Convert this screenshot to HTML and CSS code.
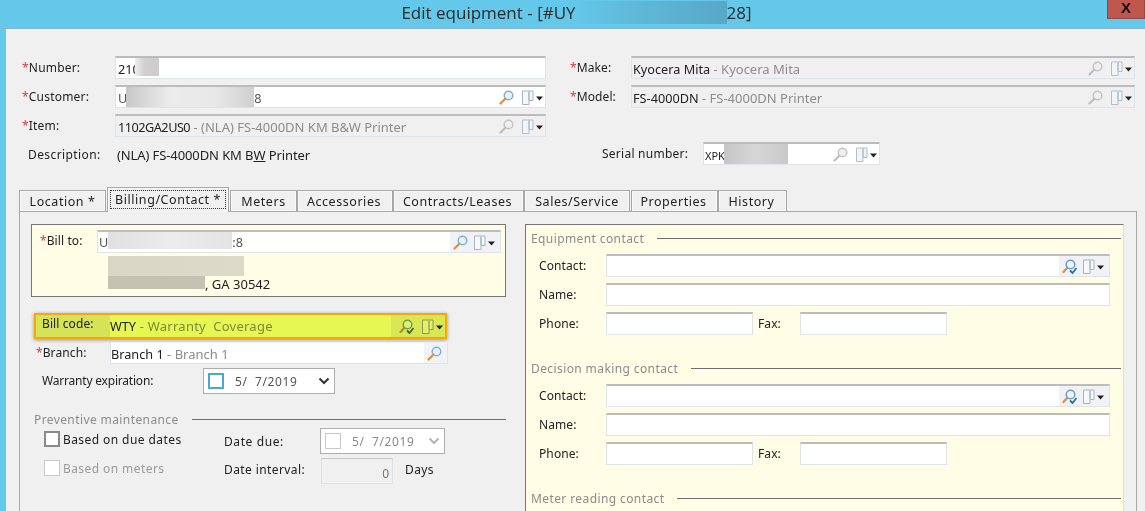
FILE: index.html
```html
<!DOCTYPE html>
<html lang="en">
<head>
<meta charset="utf-8">
<title>Edit equipment</title>
<link rel="stylesheet" href="styles.css">
</head>
<body>
<svg class="defs" width="0" height="0" aria-hidden="true">
  <defs>
    <g id="mag">
      <circle cx="9.500" cy="5.500" r="4.300" fill="#e6f2fb" stroke="#7fb2d8" stroke-width="1.500"/>
      <path d="M6.300 8.700 1.500 13.500" stroke="#d9913a" stroke-width="2.200" stroke-linecap="round"/>
    </g>
    <g id="magoff">
      <circle cx="9.500" cy="5.500" r="4.300" fill="#efefef" stroke="#c4c4c4" stroke-width="1.500"/>
      <path d="M6.300 8.700 1.500 13.500" stroke="#bdbdbd" stroke-width="2.200" stroke-linecap="round"/>
    </g>
    <g id="magchk">
      <circle cx="8.500" cy="5.500" r="4.300" fill="#eef6fc" stroke="#6a9fcb" stroke-width="1.500"/>
      <path d="M5.300 8.700 1.500 13" stroke="#d9913a" stroke-width="2.200" stroke-linecap="round"/>
      <path d="M8 11.500l2.500 2.500 4-5" fill="none" stroke="#2a6fa8" stroke-width="1.800"/>
    </g>
    <g id="maggrn">
      <circle cx="8.500" cy="5.500" r="4.300" fill="#dff07a" stroke="#6fa04a" stroke-width="1.500"/>
      <path d="M5.300 8.700 1.500 13" stroke="#a9902a" stroke-width="2.200" stroke-linecap="round"/>
      <path d="M8 11.500l2.500 2.500 4-5" fill="none" stroke="#2f6b3a" stroke-width="1.800"/>
    </g>
    <g id="doc">
      <path d="M.5 1h10.500v9.500h-4v4h-6.500z" fill="#f6f8fa" stroke="#aab4be"/>
      <path d="M7 1.500v9" stroke="#9fb4c8" stroke-width="1.500"/>
      <path d="M14 6.500h7l-3.500 4z" fill="#222"/>
    </g>
    <g id="docoff">
      <path d="M.5 1h10.500v9.500h-4v4h-6.500z" fill="#f2f4f6" stroke="#b4bec8"/>
      <path d="M7 1.500v9" stroke="#a8bccf" stroke-width="1.500"/>
      <path d="M14 6.500h7l-3.500 4z" fill="#222"/>
    </g>
    <g id="docyel">
      <path d="M.5 1h10.500v9.500h-4v4h-6.500z" fill="#e4ee66" stroke="#8f9a50"/>
      <path d="M7 1.500v9" stroke="#9da85a" stroke-width="1.500"/>
      <path d="M14 6.500h7l-3.500 4z" fill="#222"/>
    </g>
  </defs>
</svg>
<div class="app">
  <header class="titlebar">
    <h1 class="title">Edit equipment - [#UY<span class="redact-title"></span>28]</h1>
    <div class="close">X</div>
  </header>
  <main class="window">
    <section class="head">
      <div class="head-col">
        <div class="row"><label class="lbl lbl-head"><i>*</i>Number:</label>
          <div class="field grow"><span class="val">210<span class="redact r-number"></span></span></div></div>
        <div class="row"><label class="lbl lbl-head"><i>*</i>Customer:</label>
          <div class="field grow"><span class="val muted">U<span class="redact r-cust"></span>8</span>
            <span class="tools"><svg class="ic-mag"><use href="#mag"/></svg><svg class="ic-doc"><use href="#doc"/></svg></span></div></div>
        <div class="row"><label class="lbl lbl-head"><i>*</i>Item:</label>
          <div class="field off grow"><span class="val"><span class="tight">1102GA2US0</span><em>&nbsp;- (NLA) FS-4000DN KM B&amp;W Printer</em></span>
            <span class="tools"><svg class="ic-mag"><use href="#magoff"/></svg><svg class="ic-doc"><use href="#docoff"/></svg></span></div></div>
        <div class="row desc-row"><label class="lbl lbl-head lbl-plain">Description:</label>
          <span class="plain">(NLA) FS-4000DN KM B<u>W</u> Printer</span></div>
      </div>
      <div class="head-col right">
        <div class="row"><label class="lbl lbl-make"><i>*</i>Make:</label>
          <div class="field off grow"><span class="val">Kyocera Mita<em>&nbsp;- Kyocera Mita</em></span>
            <span class="tools"><svg class="ic-mag"><use href="#magoff"/></svg><svg class="ic-doc"><use href="#docoff"/></svg></span></div></div>
        <div class="row"><label class="lbl lbl-make"><i>*</i>Model:</label>
          <div class="field off grow"><span class="val">FS-4000DN<em>&nbsp;- FS-4000DN Printer</em></span>
            <span class="tools"><svg class="ic-mag"><use href="#magoff"/></svg><svg class="ic-doc"><use href="#docoff"/></svg></span></div></div>
        <div class="row spacer-row"></div>
        <div class="row serial-row"><label class="lbl lbl-serial">Serial number:</label>
          <div class="field serial"><span class="val val-small">XPK<span class="redact r-serial"></span></span>
            <span class="tools"><svg class="ic-mag"><use href="#magoff"/></svg><svg class="ic-doc"><use href="#docoff"/></svg></span></div></div>
      </div>
    </section>

    <nav class="tabs">
      <div class="tab t1">Location *</div>
      <div class="tab t2 active"><span class="focus">Billing/Contact *</span></div>
      <div class="tab t3">Meters</div>
      <div class="tab t4">Accessories</div>
      <div class="tab t5">Contracts/Leases</div>
      <div class="tab t6">Sales/Service</div>
      <div class="tab t7">Properties</div>
      <div class="tab t8">History</div>
    </nav>

    <section class="panel">
      <div class="left">
        <div class="billbox">
          <div class="billto-row"><label class="lbl lbl-bill"><i>*</i>Bill to:</label>
            <div class="field grow"><span class="val muted val-bill">U<span class="redact r-bill"></span>:8</span>
              <span class="tools shaded"><svg class="ic-mag"><use href="#mag"/></svg><svg class="ic-doc"><use href="#doc"/></svg></span></div></div>
          <div class="addr1"></div>
          <div class="addr2"><span class="addr2-redact"></span><span class="addr-text">, GA 30542</span></div>
        </div>

        <div class="highlight">
          <label class="lbl lbl-code">Bill code:</label>
          <div class="code-field"><span class="val">WTY<em class="olive">&nbsp;- Warranty&nbsp; Coverage</em></span>
            <span class="tools"><svg class="ic-mag"><use href="#maggrn"/></svg><svg class="ic-doc"><use href="#docyel"/></svg></span></div>
        </div>

        <div class="branch-row"><label class="lbl lbl-branch"><i>*</i>Branch:</label>
          <div class="field grow noborder"><span class="val">Branch 1<em>&nbsp;- Branch 1</em></span>
            <span class="tools shaded tool-single"><svg class="ic-mag"><use href="#mag"/></svg></span></div></div>

        <div class="warranty-row"><label class="lbl lbl-warranty">Warranty expiration:</label>
          <div class="date"><span class="check blue"></span><span class="date-text">5/&nbsp; 7/2019</span>
            <svg class="chev" viewBox="0 0 12 8"><path d="M1.500 1.500 6 6l4.500-4.500" fill="none" stroke="#333" stroke-width="2"/></svg></div></div>

        <div class="legend legend-pm"><span>Preventive maintenance</span><b></b></div>

        <div class="pm-grid">
          <div class="cb-row"><span class="check dark"></span><span class="cb-label">Based on due dates</span></div>
          <label class="lbl lbl-due">Date due:</label>
          <div class="date small"><span class="check light"></span><span class="date-text grey">5/&nbsp; 7/2019</span>
            <svg class="chev" viewBox="0 0 12 8"><path d="M1.500 1.500 6 6l4.500-4.500" fill="none" stroke="#b5b5b5" stroke-width="2"/></svg></div>
          <div class="cb-row cb-second"><span class="check light"></span><span class="cb-label grey">Based on meters</span></div>
          <label class="lbl lbl-interval">Date interval:</label>
          <div class="interval"><div class="num">0</div><span class="lbl days">Days</span></div>
        </div>
      </div>

      <div class="right-box">
        <div class="group">
          <div class="legend"><span>Equipment contact</span><b></b></div>
          <div class="c-row"><label class="lbl">Contact:</label><div class="field"><span class="tools shaded"><svg class="ic-mag"><use href="#magchk"/></svg><svg class="ic-doc"><use href="#doc"/></svg></span></div></div>
          <div class="c-row"><label class="lbl">Name:</label><div class="field"></div></div>
          <div class="c-row"><label class="lbl">Phone:</label><div class="phone-fax"><div class="field"></div><label class="lbl">Fax:</label><div class="field"></div></div></div>
        </div>
        <div class="group">
          <div class="legend"><span>Decision making contact</span><b></b></div>
          <div class="c-row"><label class="lbl">Contact:</label><div class="field"><span class="tools shaded"><svg class="ic-mag"><use href="#magchk"/></svg><svg class="ic-doc"><use href="#doc"/></svg></span></div></div>
          <div class="c-row"><label class="lbl">Name:</label><div class="field"></div></div>
          <div class="c-row"><label class="lbl">Phone:</label><div class="phone-fax"><div class="field"></div><label class="lbl">Fax:</label><div class="field"></div></div></div>
        </div>
        <div class="group">
          <div class="legend"><span>Meter reading contact</span><b></b></div>
        </div>
      </div>
    </section>
  </main>
</div>
</body>
</html>
```
FILE: styles.css
```css
* { box-sizing: border-box; }
html, body { margin: 0; padding: 0; }
body {
  width: 1145px;
  height: 511px;
  overflow: hidden;
  font-family: "Noto Sans", "Open Sans", sans-serif;
  font-size: 12px;
  color: #222;
}
.defs { position: absolute; }
.app {
  width: 1145px;
  height: 511px;
  background: #63c8ea;
  display: flex;
  flex-direction: column;
  overflow: hidden;
  filter: blur(.35px);
}
.titlebar {
  height: 29px;
  flex: none;
  display: flex;
  align-items: flex-start;
  justify-content: center;
  position: relative;
  border-bottom: 1px solid #8fb4c4;
}
.title {
  margin: 0;
  padding-top: 1px;
  font: 400 17px/24px "Open Sans", "Noto Sans", sans-serif;
  color: #2a2a2a;
  display: flex;
  position: relative;
  left: 4px;
}
.redact-title {
  width: 152px;
  height: 23px;
  margin-left: -1px;
  background: linear-gradient(90deg, #63c8ea, #5fb8d8 40%, #58a8c8);
}
.close {
  position: absolute;
  right: 0;
  top: 0;
  width: 38px;
  height: 19px;
  background: #c0574e;
  border: 1px solid #8d4a44;
  border-top: 0;
  text-align: center;
  font: 700 15px/15px "Liberation Sans", sans-serif;
  color: #111;
}
.window {
  flex: 1;
  margin-left: 6px;
  background: #f0f0f0;
  min-height: 0;
  display: flex;
  flex-direction: column;
}

/* header form */
.head {
  display: flex;
  padding: 27px 10px 0 16px;
  height: 158px;
  flex: none;
}
.head-col { width: 524px; display: flex; flex-direction: column; gap: 6px; }
.head-col.right { width: 565px; margin-left: 24px; }
.row { display: flex; height: 23px; flex: none; }
.desc-row { align-items: center; height: 23px; }
.lbl { white-space: nowrap; line-height: 20px; height: 20px; letter-spacing: .1px; }
.lbl i { color: #d93a3a; font-style: normal; }
.lbl-head { width: 93px; margin-top: 2px; letter-spacing: .2px; }
.lbl-plain { padding-left: 6px; margin-top: 0; letter-spacing: .4px; }
.lbl-make { width: 61px; margin-top: 2px; }
.plain { white-space: nowrap; font-size: 13px; margin-left: 2px; letter-spacing: -.1px; }
.spacer-row { height: 22px; visibility: hidden; }
.serial-row { padding-left: 32px; }
.lbl-serial { width: 101px; line-height: 22px; height: 23px; margin-top: 1px; letter-spacing: .25px; }
.serial { width: 177px; }
.val-small { font-size: 11px; }

.field {
  height: 23px;
  background: #fff;
  border: 1px solid #dde4ea;
  border-top: 2px solid #bcbcbc;
  display: flex;
  align-items: center;
  position: relative;
  overflow: hidden;
}
.grow { flex: 1; }
.off { background: #f0f0f0; }
.noborder { border-top-color: #e4e8ec; }
.val {
  flex: 1;
  padding: 3px 0 0 2px;
  display: flex;
  align-items: center;
  white-space: nowrap;
  line-height: 17px;
  min-width: 0;
  font-size: 12.700px;
}
.right .val { padding-left: 1px; }
.right .val-small { font-size: 11px; }
.tight { letter-spacing: -.5px; }
.val em { font-style: normal; color: #8c8c8c; font-size: 13px; }
.val em.olive { color: #7d8a3a; letter-spacing: .25px; }
.muted { color: #555; }
.val-bill { padding: 1px 0 0 1px; }
.redact {
  display: block;
  height: 20px;
  margin-top: -3px;
  flex: none;
}
.r-number { width: 24px; background: linear-gradient(90deg, #efefef, #cfcfcf 40%, #cdcdcd); margin-left: -5px; height: 18px; margin-top: -5px; }
.r-cust { width: 128px; background: linear-gradient(90deg, #c8c8c8, #ececec 35%, #e8e8e8 70%, #cfcfcf 100%); margin-left: -1px; }
.r-bill { width: 124px; background: linear-gradient(90deg, #e0e0e0, #ececec 50%, #e4e4e4); margin-top: -5px; height: 18px; }
.r-serial { width: 64px; background: linear-gradient(90deg, #c6c6c6, #d6d6d6 50%, #c9c9c9); margin-left: -1px; }

.tools {
  flex: none;
  height: 100%;
  display: flex;
  align-items: center;
  gap: 8px;
  padding-right: 2px;
  padding-left: 2px;
}
.tools.shaded { background: #f0f2f5; width: 50px; padding-left: 3px; gap: 6px; }
.tool-single { width: 23px !important; }
.ic-mag { width: 15px; height: 15px; flex: none; }
.ic-doc { width: 21px; height: 15px; flex: none; }

/* tabs */
.tabs {
  display: flex;
  align-items: flex-end;
  height: 24px;
  flex: none;
  margin-left: 13px;
  position: relative;
  z-index: 1;
}
.tab {
  height: 21px;
  background: #f0f0f0;
  border: 1px solid #a8a8a8;
  border-bottom: 0;
  font-size: 12.500px;
  line-height: 22px;
  text-align: center;
  letter-spacing: .55px;
  box-shadow: inset 0 0 0 1px #f8f8f8;
  white-space: nowrap;
}
.t1 { width: 87px; margin-right: 1px; }
.t2 {
  width: 122px;
  height: 25px;
  margin-bottom: -1px;
  margin-right: 1px;
  padding: 2px;
  position: relative;
  line-height: 18px;
}
.focus { display: block; height: 19px; border: 1px dotted #333; }
.t3 { width: 67px; }
.t4 { width: 96px; padding-right: 2px; }
.t5 { width: 131px; padding-right: 2px; }
.t6 { width: 106px; margin-right: 1px; }
.t7 { width: 87px; padding-right: 2px; }
.t8 { width: 69px; padding-right: 2px; }

/* panel */
.panel {
  flex: 1;
  min-height: 0;
  margin: 0 8px 0 13px;
  border: 1px solid #a8a8a8;
  border-bottom: 0;
  padding: 12px 12px 0 11px;
  display: flex;
  gap: 19px;
  overflow: hidden;
}
.left { width: 475px; flex: none; }
.billbox {
  height: 73px;
  background: #fffde6;
  border: 1px solid #777;
  padding: 5px 4px 0 0;
}
.billto-row { display: flex; }
.lbl-bill { width: 65px; padding-left: 8px; margin-top: 0; line-height: 22px; }
.addr1 {
  width: 136px;
  height: 20px;
  margin: 3px 0 0 76px;
  background: linear-gradient(90deg, #d8d6c4, #dcdac8);
}
.addr2 { display: flex; height: 18px; margin-left: 76px; align-items: center; }
.addr2-redact { width: 97px; height: 13px; background: #c4c2b0; align-self: flex-start; }
.addr-text { line-height: 16px; font-size: 13px; margin-top: -3px; }

.highlight {
  margin: 16px 0 0 3px;
  width: 413px;
  height: 26px;
  border: 2px solid #f5a80e;
  background: #d6e356;
  box-shadow: 0 1px 4px rgba(0,0,0,.4);
  display: flex;
  align-items: center;
  padding-left: 6px;
}
.lbl-code { width: 68px; margin-top: -5px; }
.code-field { flex: 1; display: flex; height: 100%; align-items: center; background: #e6f652; }
.code-field .tools { background: #d9e656; padding-left: 8px; }
.code-field .val { padding: 0; }

.branch-row { display: flex; margin-top: 3px; height: 22px; padding-left: 5px; }
.lbl-branch { width: 74px; line-height: 21px; }
.branch-row .field { margin-right: 58px; height: 22px; border-top: 1px solid #eceff2; }
.branch-row .val { padding-left: 0; }

.warranty-row { display: flex; margin-top: 4px; padding-left: 11px; align-items: center; }
.lbl-warranty { width: 161px; letter-spacing: -.2px; }
.date {
  width: 132px;
  height: 26px;
  background: #fff;
  border: 1px solid #adadad;
  display: flex;
  align-items: center;
  padding-left: 4px;
}
.date.small { width: 125px; height: 26px; padding-left: 4px; }
.check {
  width: 16px;
  height: 16px;
  background: #fff;
  border: 2px solid #8a8a8a;
  flex: none;
  display: block;
}
.check.blue { border-color: #4aa6dd; }
.check.dark { border-color: #8a8a8a; }
.check.light { border: 1px solid #c8c8c8; }
.date-text { margin-left: 11px; flex: 1; letter-spacing: .6px; color: #555; }
.grey { color: #9a9a9a; }
.date-text.grey { color: #8a8a8a; }
.chev { width: 12px; height: 8px; margin-right: 4px; flex: none; }

.legend {
  display: flex;
  align-items: center;
  height: 20px;
  gap: 13px;
  color: #8c8c8c;
  letter-spacing: .4px;
}
.legend b { flex: 1; height: 1px; background: #6e6e6e; margin-top: 1px; }
.legend span { white-space: nowrap; }
.legend-pm { margin: 16px 0 0 3px; height: 18px; }

.pm-grid {
  display: grid;
  grid-template-columns: 180px 96px 1fr;
  grid-template-rows: 26px 26px;
  row-gap: 4px;
  margin: 0 0 0 13px;
  align-items: center;
}
.cb-row { display: flex; align-items: center; gap: 3px; margin-top: -4px; }
.cb-second { margin-top: -6px; }
.cb-row .check { width: 16px; height: 16px; }
.cb-label { white-space: nowrap; letter-spacing: .42px; }
.lbl-due { letter-spacing: .6px; margin-top: 1px; }
.lbl-interval { letter-spacing: .4px; margin-top: -3px; }
.interval { display: flex; align-items: center; margin-left: 1px; }
.num {
  width: 72px;
  height: 26px;
  border: 1px solid #dde2e6;
  border-top: 1px solid #c8c8c8;
  background: #f0f0f0;
  text-align: right;
  padding: 6px 3px 0 0;
  line-height: 18px;
  color: #777;
}
.days { margin-left: 12px; margin-top: -2px; letter-spacing: .4px; }

/* right box */
.right-box {
  width: 599px;
  flex: none;
  margin-bottom: -20px;
  background: #fffde6;
  border: 1px solid #777;
  border-right: 1px solid #e0e0d8;
  padding: 3px 2px 0 5px;
  display: flex;
  flex-direction: column;
  gap: 23px;
}
.group { display: flex; flex-direction: column; gap: 6px; flex: none; }
.c-row { display: flex; height: 23px; padding-left: 8px; }
.c-row > .lbl { width: 67px; line-height: 24px; }
.c-row > .field { width: 504px; justify-content: flex-end; }
.phone-fax { display: flex; gap: 0; }
.phone-fax .field { width: 147px; }
.phone-fax .lbl { width: 47px; padding-left: 5px; line-height: 24px; }
```
